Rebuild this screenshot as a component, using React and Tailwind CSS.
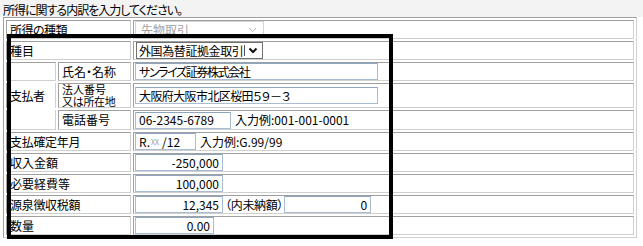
import React from "react";

const font = { fontFamily: '"Noto Sans CJK JP", "Noto Sans", sans-serif' };

function Box({ w, align = "left", children, className = "" }) {
  return (
    <div
      className={`h-[17px] border border-[#a8bdd3] border-t-[#8ea6c0] bg-white flex items-center px-[3px] text-[12px] leading-[14px] text-black whitespace-nowrap ${
        align === "right" ? "justify-end" : ""
      } ${className}`}
      style={{ width: w }}
    >
      {children}
    </div>
  );
}

function Label({ children, colSpan = 2, className = "" }) {
  return (
    <td
      colSpan={colSpan}
      className={`border border-[#9f9f9f] border-r-[#cfcfcf] border-b-[#cfcfcf] p-0 pl-[3px] align-middle text-[12px] leading-[14px] whitespace-nowrap ${className}`}
    >
      {children}
    </td>
  );
}

function Val({ children }) {
  return (
    <td className="border border-[#9f9f9f] border-r-[#cfcfcf] border-b-[#cfcfcf] p-0 pl-[1px] align-middle">
      <div className="flex items-center text-[12px] leading-[14px] whitespace-nowrap">{children}</div>
    </td>
  );
}

export default function App() {
  return (
    <div
      className="w-[643px] h-[246px] bg-white relative overflow-hidden text-black [font-feature-settings:'palt']"
      style={font}
    >
      <div className="h-[17px] bg-[#f3f3f3] pl-[3px] pt-[3px] text-[12px] leading-[13px] tracking-[-1px] whitespace-nowrap">
        所得に関する内訳を入力してください。
      </div>
      <table className="ml-[3px] w-[634px] table-fixed border-separate border-spacing-[2px] border border-[#a0a0a0] border-r-[#d0d0d0] border-b-[#d0d0d0] bg-white">
        <colgroup>
          <col className="w-[50px]" />
          <col className="w-[73px]" />
          <col />
        </colgroup>
        <tbody>
          <tr className="h-[19px]">
            <Label className="tracking-[-0.5px]">所得の種類</Label>
            <Val>
              <div className="w-[129px] h-[17px] border border-[#d4d4d4] bg-white flex items-center justify-between pl-[5px] pr-[6px] text-[#a3a3a3]">
                <span>先物取引</span>
                <svg width="9" height="6" viewBox="0 0 9 6">
                  <polyline points="1,1 4.5,4.5 8,1" fill="none" stroke="#b5b5b5" strokeWidth="1" />
                </svg>
              </div>
            </Val>
          </tr>
          <tr className="h-[19px]">
            <Label>種目</Label>
            <Val>
              <div className="ml-[1px] w-[127px] h-[17px] border border-[#707070] bg-white flex items-center pl-[2px]">
                <span className="tracking-[-0.4px]">外国為替証拠金取引</span>
                <span className="ml-[1px] w-px h-[11px] bg-[#555]" />
                <svg className="ml-[3px]" width="10" height="7" viewBox="0 0 10 7">
                  <polyline points="1.5,1.5 5,5 8.5,1.5" fill="none" stroke="#111" strokeWidth="2" />
                </svg>
              </div>
            </Val>
          </tr>
          <tr className="h-[19px]">
            <Label colSpan={1}>
              <span />
            </Label>
            <Label colSpan={1}>氏名・名称</Label>
            <Val>
              <Box w={243}>
                <span className="tracking-[-1.4px]">サンライズ証券株式会社</span>
              </Box>
            </Val>
          </tr>
          <tr className="h-[25px]">
            <Label colSpan={1} className="border-t-0 border-b-0 tracking-[-0.5px]">支払者</Label>
            <Label colSpan={1}>
              <div className="text-[11px] leading-[11.5px]">法人番号</div>
              <div className="text-[11px] leading-[11.5px] tracking-[-0.3px]">又は所在地</div>
            </Label>
            <Val>
              <Box w={243}>
                <span className="tracking-[-0.6px]">大阪府大阪市北区桜田５９－３</span>
              </Box>
            </Val>
          </tr>
          <tr className="h-[20px]">
            <Label colSpan={1} className="border-t-0">
              <span />
            </Label>
            <Label colSpan={1}>電話番号</Label>
            <Val>
              <Box w={96}>06-2345-6789</Box>
              <span className="ml-[4px]">入力例:001-001-0001</span>
            </Val>
          </tr>
          <tr className="h-[19px]">
            <Label className="tracking-[-0.3px]">支払確定年月</Label>
            <Val>
              <Box w={61}>
                <span>R.</span>
                <span className="text-[7px] text-[#9a9a9a] ml-[1px] mr-[3px] leading-[8px]">XX</span>
                <span>/12</span>
              </Box>
              <span className="ml-[4px]">入力例:G.99/99</span>
            </Val>
          </tr>
          <tr className="h-[19px]">
            <Label>収入金額</Label>
            <Val>
              <Box w={88} align="right">-250,000</Box>
            </Val>
          </tr>
          <tr className="h-[19px]">
            <Label>必要経費等</Label>
            <Val>
              <Box w={88} align="right">100,000</Box>
            </Val>
          </tr>
          <tr className="h-[19px]">
            <Label className="tracking-[-0.3px]">源泉徴収税額</Label>
            <Val>
              <Box w={88} align="right">12,345</Box>
              <span className="ml-[2px] tracking-[-0.3px]">（内未納額）</span>
              <Box w={87} align="right" className="ml-[1px]">0</Box>
            </Val>
          </tr>
          <tr className="h-[19px]">
            <Label>数量</Label>
            <Val>
              <Box w={79} align="right">0.00</Box>
            </Val>
          </tr>
        </tbody>
      </table>
      <div className="absolute left-[7px] top-[34px] w-[386px] h-[205px] border-[4px] border-black pointer-events-none" />
    </div>
  );
}
